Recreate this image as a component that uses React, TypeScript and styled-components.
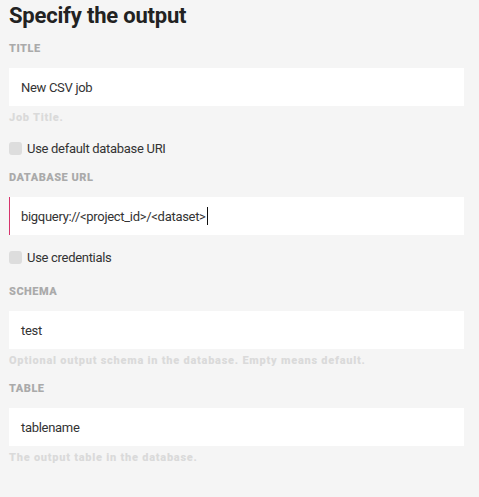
import React from 'react';
import styled, { createGlobalStyle } from 'styled-components';

/*
 * Styles.
 */

const GlobalStyle = createGlobalStyle`
  html, body {
    margin: 0;
    padding: 0;
    background: #f5f5f5;
  }

  body {
    font-family: Roboto, 'Liberation Sans', sans-serif;
    color: #333;
  }
`;

const Wrapper = styled.div`
  display: flex;
  flex-direction: column;
  padding: 3px 15px 30px 9px;
  min-height: 497px;
  box-sizing: border-box;
`;

const Title = styled.h2`
  margin: 0;
  font-size: 22px;
  line-height: 26px;
  font-weight: 700;
  letter-spacing: -0.2px;
  color: #222;
`;

const Block = styled.div<{ $top: number }>`
  display: flex;
  flex-direction: column;
  margin-top: ${({ $top }) => $top}px;
`;

const Label = styled.label`
  font-size: 11px;
  line-height: 14px;
  font-weight: 900;
  letter-spacing: 0.5px;
  text-transform: uppercase;
  color: #aaa;
  margin-bottom: 12px;
`;

const Field = styled.div<{ $focused?: boolean }>`
  display: flex;
  align-items: center;
  height: 38px;
  padding-left: 11px;
  background: #fff;
  border-left: 1px solid ${({ $focused }) => ($focused ? '#d6336c' : 'transparent')};
  font-size: 13px;
  letter-spacing: -0.3px;
  color: #333;
  white-space: pre;
`;

const Caret = styled.span`
  display: inline-block;
  width: 1px;
  height: 18px;
  margin-left: 1px;
  background: #111;
`;

const Help = styled.div`
  margin-top: 5px;
  font-size: 11px;
  line-height: 14px;
  font-weight: 900;
  letter-spacing: 0.75px;
  color: #dadada;
`;

const CheckRow = styled.label<{ $top: number }>`
  display: flex;
  align-items: center;
  height: 18px;
  margin-top: ${({ $top }) => $top}px;
  font-size: 13px;
  letter-spacing: -0.3px;
  color: #333;
`;

const Box = styled.span`
  width: 13px;
  height: 13px;
  border-radius: 3px;
  background: #ddd;
  margin-right: 5px;
  flex-shrink: 0;
`;

/*
 * App component.
 */

function App() {
  return (
    <Wrapper>
      <GlobalStyle />
      <Title>{'Specify the output'}</Title>

      <Block $top={13}>
        <Label>{'Title'}</Label>
        <Field>{'New CSV job'}</Field>
        <Help>{'Job Title.'}</Help>
      </Block>

      <CheckRow $top={14}>
        <Box />
        {'Use default database URI'}
      </CheckRow>

      <Block $top={14}>
        <Label>{'Database URL'}</Label>
        <Field $focused>
          {'bigquery://<project_id>/<dataset>'}
          <Caret />
        </Field>
      </Block>

      <CheckRow $top={13}>
        <Box />
        {'Use credentials'}
      </CheckRow>

      <Block $top={19}>
        <Label>{'Schema'}</Label>
        <Field>{'test'}</Field>
        <Help>{'Optional output schema in the database. Empty means default.'}</Help>
      </Block>

      <Block $top={14}>
        <Label>{'Table'}</Label>
        <Field>{'tablename'}</Field>
        <Help>{'The output table in the database.'}</Help>
      </Block>
    </Wrapper>
  );
}

/*
 * Export the component.
 */

export default App;
